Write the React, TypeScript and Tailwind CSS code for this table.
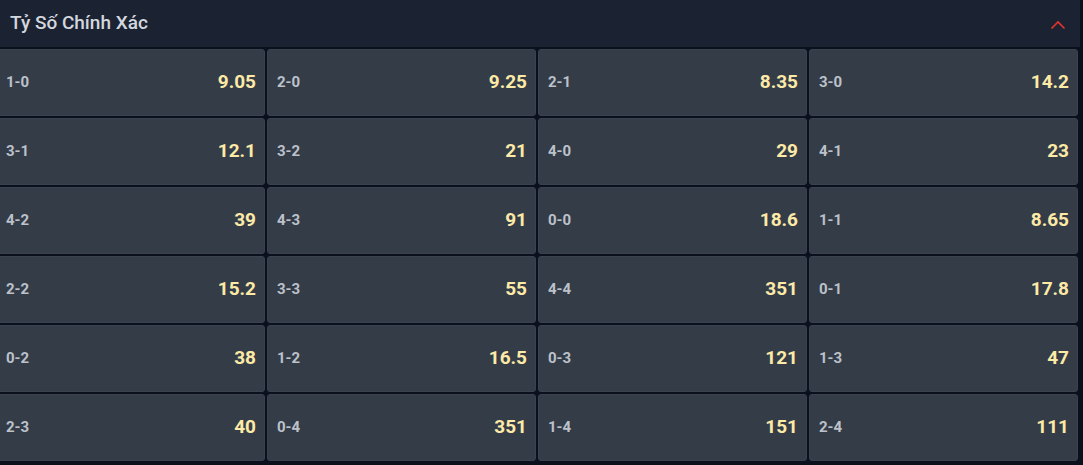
import React from 'react';

const odds: [string, string][] = [
  ['1-0', '9.05'], ['2-0', '9.25'], ['2-1', '8.35'], ['3-0', '14.2'],
  ['3-1', '12.1'], ['3-2', '21'], ['4-0', '29'], ['4-1', '23'],
  ['4-2', '39'], ['4-3', '91'], ['0-0', '18.6'], ['1-1', '8.65'],
  ['2-2', '15.2'], ['3-3', '55'], ['4-4', '351'], ['0-1', '17.8'],
  ['0-2', '38'], ['1-2', '16.5'], ['0-3', '121'], ['1-3', '47'],
  ['2-3', '40'], ['0-4', '351'], ['1-4', '151'], ['2-4', '111'],
];

export default function App() {
  return (
    <div
      className="w-[1083px] h-[465px] bg-[#0a111d] overflow-hidden"
      style={{ fontFamily: 'Roboto, "Noto Sans", sans-serif' }}
    >
      <div className="w-[1080px] h-[47px] bg-[#1b2333] flex items-center justify-between pl-[10px] pr-[14px]">
        <span className="text-[19px] font-medium text-[#d3d7de]">Tỷ Số Chính Xác</span>
        <svg width="16" height="10" viewBox="0 0 16 10" fill="none" className="mt-[2px]">
          <path d="M1.5 8.5 L8 2 L14.5 8.5" stroke="#e8322d" strokeWidth="1.6" />
        </svg>
      </div>

      <div className="-ml-[4px] mt-[2px] grid grid-cols-[269px_269px_269px_269px] gap-[2px] auto-rows-[67px]">
        {odds.map(([score, price]) => (
          <div
            key={score}
            className="bg-[#343c48] rounded-[3px] border border-[#3a4250] flex items-center justify-between pl-[9px] pr-[8px]"
          >
            <span className="text-[15px] font-bold text-[#bcc1ca]">{score}</span>
            <span className="text-[19px] font-bold text-[#fdeaa7]">{price}</span>
          </div>
        ))}
      </div>
    </div>
  );
}
